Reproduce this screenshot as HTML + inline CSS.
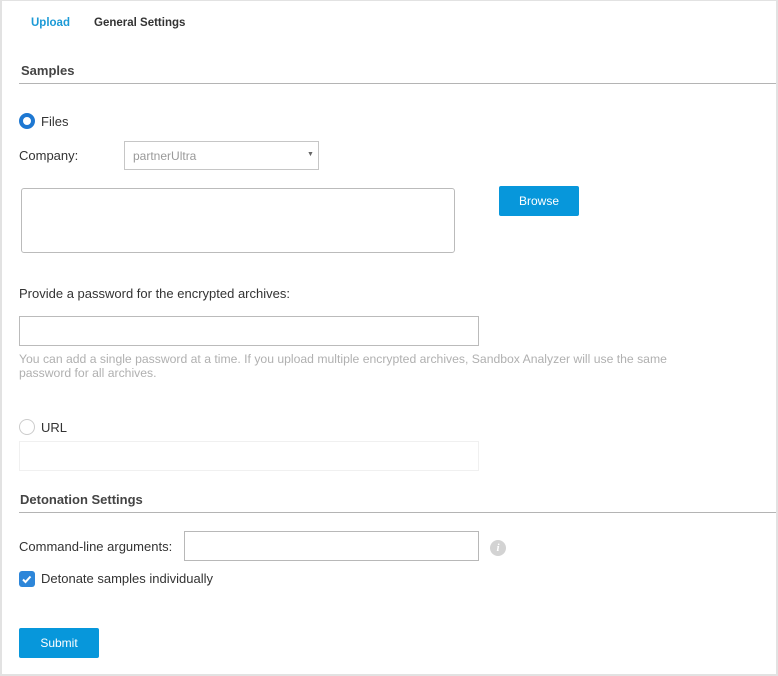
<!DOCTYPE html>
<html><head><style>
*{margin:0;padding:0;box-sizing:border-box}
body{width:778px;height:676px;background:#fff;font-family:"Liberation Sans",Arial,sans-serif;font-size:12px;color:#333;position:relative;overflow:hidden}
.frame{position:absolute;left:0;top:0;width:778px;height:676px;border:2px solid #e2e2e2;border-top:1px solid #e2e2e2}
.a{position:absolute;white-space:nowrap}
.hr{position:absolute;left:19px;right:2px;height:1px;background:#b4b4b4}
.box{position:absolute;border:1px solid #bdbdbd;background:#fff}
.btn{position:absolute;background:#0797db;color:#fff;text-align:center;border-radius:2px}
</style></head><body>
<div class="frame"></div>
<div class="a" style="left:31px;top:17px;font-weight:bold;color:#1c9ad6;font-size:11.5px">Upload</div>
<div class="a" style="left:94px;top:17px;font-weight:bold;color:#333;font-size:11.5px">General Settings</div>
<div class="a" style="left:21px;top:63px;font-weight:bold;font-size:13px;color:#444">Samples</div>
<div class="hr" style="top:83px"></div>
<div class="a" style="left:19px;top:113px;width:16px;height:16px;border-radius:50%;border:4px solid #1e78d2;background:#fff"></div>
<div class="a" style="left:41px;top:114px;font-size:13px">Files</div>
<div class="a" style="left:19px;top:148px;font-size:13px">Company:</div>
<div class="box" style="left:124px;top:141px;width:195px;height:29px;border-color:#c6c6c6"></div>
<div class="a" style="left:133px;top:149px;color:#999">partnerUltra</div>
<div class="a" style="left:307px;top:151px;font-size:7px;color:#666">▼</div>
<div class="box" style="left:21px;top:188px;width:434px;height:65px;border-radius:3px;border-color:#bbb"></div>
<div class="btn" style="left:499px;top:186px;width:80px;height:30px;line-height:30px">Browse</div>
<div class="a" style="left:19px;top:286px;font-size:13px">Provide a password for the encrypted archives:</div>
<div class="box" style="left:19px;top:316px;width:460px;height:30px;border-color:#bbb"></div>
<div class="a" style="left:19px;top:352px;color:#b0b0b0;font-size:12.2px;line-height:14px">You can add a single password at a time. If you upload multiple encrypted archives, Sandbox Analyzer will use the same<br>password for all archives.</div>
<div class="a" style="left:19px;top:419px;width:16px;height:16px;border-radius:50%;border:1px solid #ccc"></div>
<div class="a" style="left:41px;top:420px;font-size:13px">URL</div>
<div class="box" style="left:19px;top:441px;width:460px;height:30px;border-color:#f0f0f0"></div>
<div class="a" style="left:20px;top:492px;font-weight:bold;font-size:13px;color:#444">Detonation Settings</div>
<div class="hr" style="top:512px"></div>
<div class="a" style="left:19px;top:539px;font-size:13px">Command-line arguments:</div>
<div class="box" style="left:184px;top:531px;width:295px;height:30px;border-color:#b8b8b8"></div>
<div class="a" style="left:490px;top:540px;width:16px;height:16px;border-radius:50%;background:#d3d3d3;color:#fff;font-size:11px;font-weight:bold;font-style:italic;text-align:center;line-height:16px;font-family:'Liberation Serif',serif">i</div>
<div class="a" style="left:19px;top:571px;width:16px;height:16px;border-radius:3px;background:#2d86d9"><svg width="16" height="16"><path d="M4 8.5l2.5 2.5 5-5.5" stroke="#fff" stroke-width="2" fill="none"/></svg></div>
<div class="a" style="left:41px;top:571px;font-size:13px">Detonate samples individually</div>
<div class="btn" style="left:19px;top:628px;width:80px;height:30px;line-height:30px">Submit</div>
</body></html>
